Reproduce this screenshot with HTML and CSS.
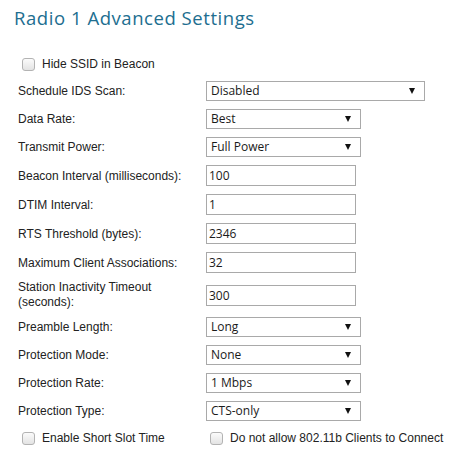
FILE: index.html
```html
<!DOCTYPE html>
<html>
<head>
<meta charset="utf-8">
<link rel="stylesheet" href="styles.css">
</head>
<body>
<div class="page">
  <h1 class="title">Radio 1 Advanced Settings</h1>
  <form class="form">
    <label class="check-row check-top"><input type="checkbox" class="cb"><span>Hide SSID in Beacon</span></label>

    <div class="row"><span class="lbl">Schedule IDS Scan:</span><div class="sel sel-wide"><select><option>Disabled</option></select></div></div>
    <div class="row"><span class="lbl">Data Rate:</span><div class="sel"><select><option>Best</option></select></div></div>
    <div class="row"><span class="lbl">Transmit Power:</span><div class="sel"><select><option>Full Power</option></select></div></div>
    <div class="row"><span class="lbl">Beacon Interval (milliseconds):</span><input class="txt" type="text" value="100"></div>
    <div class="row"><span class="lbl">DTIM Interval:</span><input class="txt" type="text" value="1"></div>
    <div class="row"><span class="lbl">RTS Threshold (bytes):</span><input class="txt" type="text" value="2346"></div>
    <div class="row"><span class="lbl">Maximum Client Associations:</span><input class="txt" type="text" value="32"></div>
    <div class="row row-tall"><span class="lbl lbl-wrap">Station Inactivity Timeout (seconds):</span><input class="txt" type="text" value="300"></div>
    <div class="row"><span class="lbl">Preamble Length:</span><div class="sel"><select><option>Long</option></select></div></div>
    <div class="row"><span class="lbl">Protection Mode:</span><div class="sel"><select><option>None</option></select></div></div>
    <div class="row"><span class="lbl">Protection Rate:</span><div class="sel"><select><option>1 Mbps</option></select></div></div>
    <div class="row"><span class="lbl">Protection Type:</span><div class="sel"><select><option>CTS-only</option></select></div></div>

    <div class="row row-checks">
      <label class="check-row col-a"><input type="checkbox" class="cb"><span>Enable Short Slot Time</span></label>
      <label class="check-row"><input type="checkbox" class="cb"><span>Do not allow 802.11b Clients to Connect</span></label>
    </div>
  </form>
</div>
</body>
</html>
```

FILE: styles.css
```css
html, body {
  margin: 0;
  padding: 0;
  background: #fff;
}
.page {
  padding: 6px 0 0 0;
  font-family: "Liberation Sans", Arial, sans-serif;
  font-size: 12px;
  color: #222;
}
.title {
  margin: 0 0 24px 14px;
  font-family: "Open Sans", sans-serif;
  font-weight: 400;
  font-size: 18.5px;
  letter-spacing: 0.55px;
  line-height: 24px;
  color: #216e90;
}
.form {
  padding-left: 18px;
  display: flex;
  flex-direction: column;
  gap: 8px;
}
.check-row {
  display: flex;
  align-items: center;
  height: 20px;
  line-height: 14px;
}
.check-top {
  margin-bottom: -1px;
}
.cb {
  appearance: none;
  -webkit-appearance: none;
  width: 13px;
  height: 13px;
  margin: 0 7px 0 4px;
  border: 1px solid #b3b3b3;
  border-radius: 3px;
  background: linear-gradient(#fbfbfb, #e3e3e3);
  box-sizing: border-box;
}
.row {
  display: flex;
  align-items: center;
}
.row-tall {
  margin: -1px 0;
}
.lbl {
  width: 188px;
  flex: none;
  line-height: 14px;
}
.lbl-wrap {
  width: 150px;
  margin-right: 38px;
  line-height: 15px;
}
.sel {
  position: relative;
  width: 155px;
  height: 20px;
}
.sel-wide {
  width: 219px;
}
.sel select {
  appearance: none;
  -webkit-appearance: none;
  width: 100%;
  height: 20px;
  margin: 0;
  padding: 0 20px 0 4px;
  border: 1px solid #a9a9a9;
  border-radius: 0;
  background: #fff;
  font-family: "Open Sans", sans-serif;
  font-size: 12px;
  color: #1a1a1a;
  box-sizing: border-box;
  line-height: 18px;
}
.sel::after {
  content: "";
  position: absolute;
  right: 10px;
  top: 7px;
  width: 0;
  height: 0;
  border-left: 3px solid transparent;
  border-right: 3px solid transparent;
  border-top: 6px solid #111;
  pointer-events: none;
}
.txt {
  width: 150px;
  height: 21px;
  margin: 0;
  padding: 0 2px;
  border: 1px solid #a9a9a9;
  border-radius: 0;
  font-family: "Open Sans", sans-serif;
  font-size: 12px;
  color: #1a1a1a;
  box-sizing: border-box;
  outline: none;
}
.row-checks {
  margin-top: -1px;
}
.col-a {
  width: 188px;
}
```
